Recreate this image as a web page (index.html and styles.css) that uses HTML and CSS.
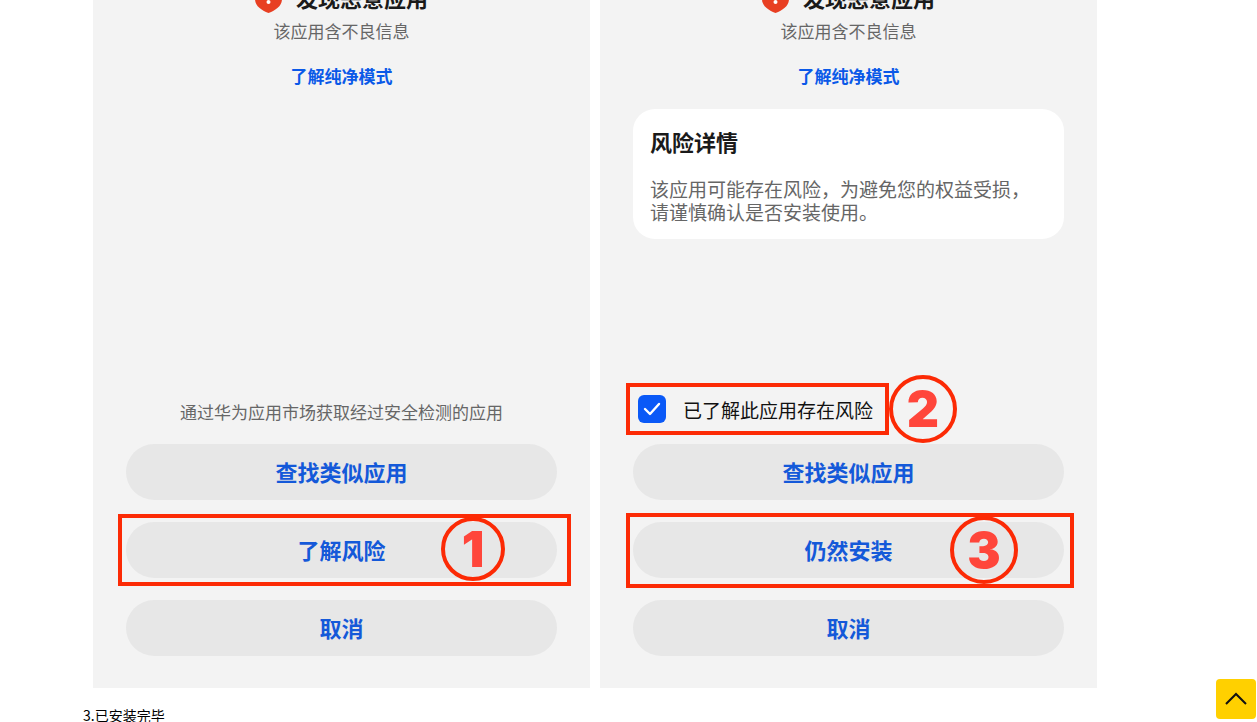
FILE: index.html
```html
<!DOCTYPE html>
<html lang="zh-CN">
<head>
<meta charset="utf-8">
<title>安装教程</title>
<link rel="stylesheet" href="styles.css">
</head>
<body>

<div class="article">
	<div class="shots">
		<div class="phone">
			<h2 class="alert">
				<svg class="shield" viewBox="0 0 27 32"><path d="M13.5 0 L27 5 V18 C27 25 21 29 13.5 32 C6 29 0 25 0 18 V5 Z" fill="#e83f22"/><path d="M13.5 8 V16" stroke="#fff" stroke-width="3" stroke-linecap="round"/><circle cx="13.5" cy="21" r="2" fill="#fff"/></svg>
				发现恶意应用
			</h2>
			<p class="reason">该应用含不良信息</p>
			<a class="more" href="#">了解纯净模式</a>
			<div class="actions">
				<p class="note">通过华为应用市场获取经过安全检测的应用</p>
				<div class="line"><button type="button" class="btn">查找类似应用</button></div>
				<div class="line">
					<button type="button" class="btn">了解风险</button>
					<span class="frame frame1"></span>
					<span class="step step1">1</span>
				</div>
				<div class="line"><button type="button" class="btn">取消</button></div>
			</div>
		</div>

		<div class="phone">
			<h2 class="alert">
				<svg class="shield" viewBox="0 0 27 32"><path d="M13.5 0 L27 5 V18 C27 25 21 29 13.5 32 C6 29 0 25 0 18 V5 Z" fill="#e83f22"/><path d="M13.5 8 V16" stroke="#fff" stroke-width="3" stroke-linecap="round"/><circle cx="13.5" cy="21" r="2" fill="#fff"/></svg>
				发现恶意应用
			</h2>
			<p class="reason">该应用含不良信息</p>
			<a class="more" href="#">了解纯净模式</a>
			<div class="card">
				<h3>风险详情</h3>
				<p>该应用可能存在风险，为避免您的权益受损，请谨慎确认是否安装使用。</p>
			</div>
			<div class="actions">
				<div class="agree">
					<input type="checkbox" id="agree" checked>
					<label for="agree">已了解此应用存在风险</label>
					<span class="step step2">2</span>
				</div>
				<div class="line"><button type="button" class="btn">查找类似应用</button></div>
				<div class="line">
					<button type="button" class="btn">仍然安装</button>
					<span class="frame frame3"></span>
					<span class="step step3">3</span>
				</div>
				<div class="line"><button type="button" class="btn">取消</button></div>
			</div>
		</div>
	</div>
	<p class="caption">3.已安装完毕</p>
</div>

<button type="button" class="totop" aria-label="返回顶部">
	<svg width="22" height="14" viewBox="0 0 22 14"><path d="M1 12 L11 2 L21 12" fill="none" stroke="#111" stroke-width="2"/></svg>
</button>

</body>
</html>
```
FILE: styles.css
```css
body {
	margin: 0;
	background: #fff;
	color: #000;
	font-family: "Noto Sans CJK SC", sans-serif;
}
h2, h3, p {
	margin: 0;
}
button {
	border: 0;
	padding: 0;
	font-family: inherit;
	cursor: pointer;
}
.article {
	max-width: 1091px;
	margin: -18px auto 0;
}
.shots {
	display: grid;
	grid-template-columns: 1fr 1fr;
	gap: 10px;
	padding: 0 77px 0 10px;
}
.phone {
	display: flex;
	flex-direction: column;
	padding: 0 33px 32px;
	background: #f3f3f3;
}

/* warning heading */
.alert {
	display: flex;
	justify-content: center;
	align-items: center;
	gap: 14px;
	height: 30px;
	font-size: 22px;
	line-height: 30px;
	font-weight: 700;
	color: #1a1a1a;
}
.shield {
	width: 27px;
	height: 32px;
}
.reason {
	margin-top: 7px;
	font-size: 17px;
	line-height: 24px;
	color: #666;
	text-align: center;
}
.more {
	margin-top: 21px;
	font-size: 17px;
	line-height: 24px;
	font-weight: 700;
	color: #0a59e8;
	text-align: center;
	text-decoration: none;
}
.card {
	margin-top: 21px;
	padding: 16px 17px;
	border-radius: 22px;
	background: #fff;
}
.card h3 {
	font-size: 22px;
	line-height: 32px;
	font-weight: 700;
	color: #1a1a1a;
}
.card p {
	margin-top: 20px;
	font-size: 19px;
	line-height: 23px;
	color: #666;
}

/* bottom part */
.actions {
	margin-top: auto;
}
.card + .actions {
	margin-top: 144px;
}
.note {
	margin-bottom: 20px;
	font-size: 17px;
	line-height: 24px;
	color: #666;
	text-align: center;
}
.line {
	position: relative;
}
.line + .line {
	margin-top: 22px;
}
.btn {
	display: block;
	width: 100%;
	height: 56px;
	padding-bottom: 3px;
	border-radius: 28px;
	background: #e7e7e7;
	font-size: 22px;
	font-weight: 700;
	color: #1459d9;
}
.agree {
	position: relative;
	display: flex;
	align-items: center;
	gap: 17px;
	width: fit-content;
	height: 52px;
	box-sizing: border-box;
	margin: 0 0 9px -7px;
	padding: 0 12px 0 8px;
	border: 4px solid #fc2a05;
	font-size: 19px;
	color: #111;
}
.agree input {
	appearance: none;
	width: 28px;
	height: 28px;
	margin: 0;
	border-radius: 6px;
	background: #0a59f7 url("data:image/svg+xml,%3Csvg xmlns='http://www.w3.org/2000/svg' viewBox='0 0 28 28'%3E%3Cpath d='M7 14 L12 19 L21 9' fill='none' stroke='%23fff' stroke-width='2.4' stroke-linecap='round' stroke-linejoin='round'/%3E%3C/svg%3E");
}

/* red marks */
.frame {
	position: absolute;
	border: 4px solid #fc2a05;
	pointer-events: none;
}
.frame1 {
	inset: -8px -14px -8px -8px;
}
.frame3 {
	inset: -9px -10px -10px -7px;
}
.step {
	position: absolute;
	display: flex;
	justify-content: center;
	align-items: center;
	box-sizing: border-box;
	width: 68px;
	height: 68px;
	border: 4px solid #fc2a05;
	border-radius: 50%;
	font-family: Inter, sans-serif;
	font-size: 50px;
	line-height: 50px;
	font-weight: 900;
	color: #ff463b;
	pointer-events: none;
}
.step1 {
	top: -5px;
	right: 52px;
	width: 64px;
	height: 64px;
}
.step2 {
	top: -12px;
	left: 100%;
	margin-left: 4px;
}
.step3 {
	top: -6px;
	right: 46px;
}

.caption {
	margin-top: 15px;
	font-size: 14px;
	line-height: 24px;
}
.totop {
	position: fixed;
	right: 1px;
	bottom: 3px;
	display: flex;
	justify-content: center;
	align-items: center;
	width: 40px;
	height: 40px;
	border-radius: 4px;
	background: #ffd000;
}
```
